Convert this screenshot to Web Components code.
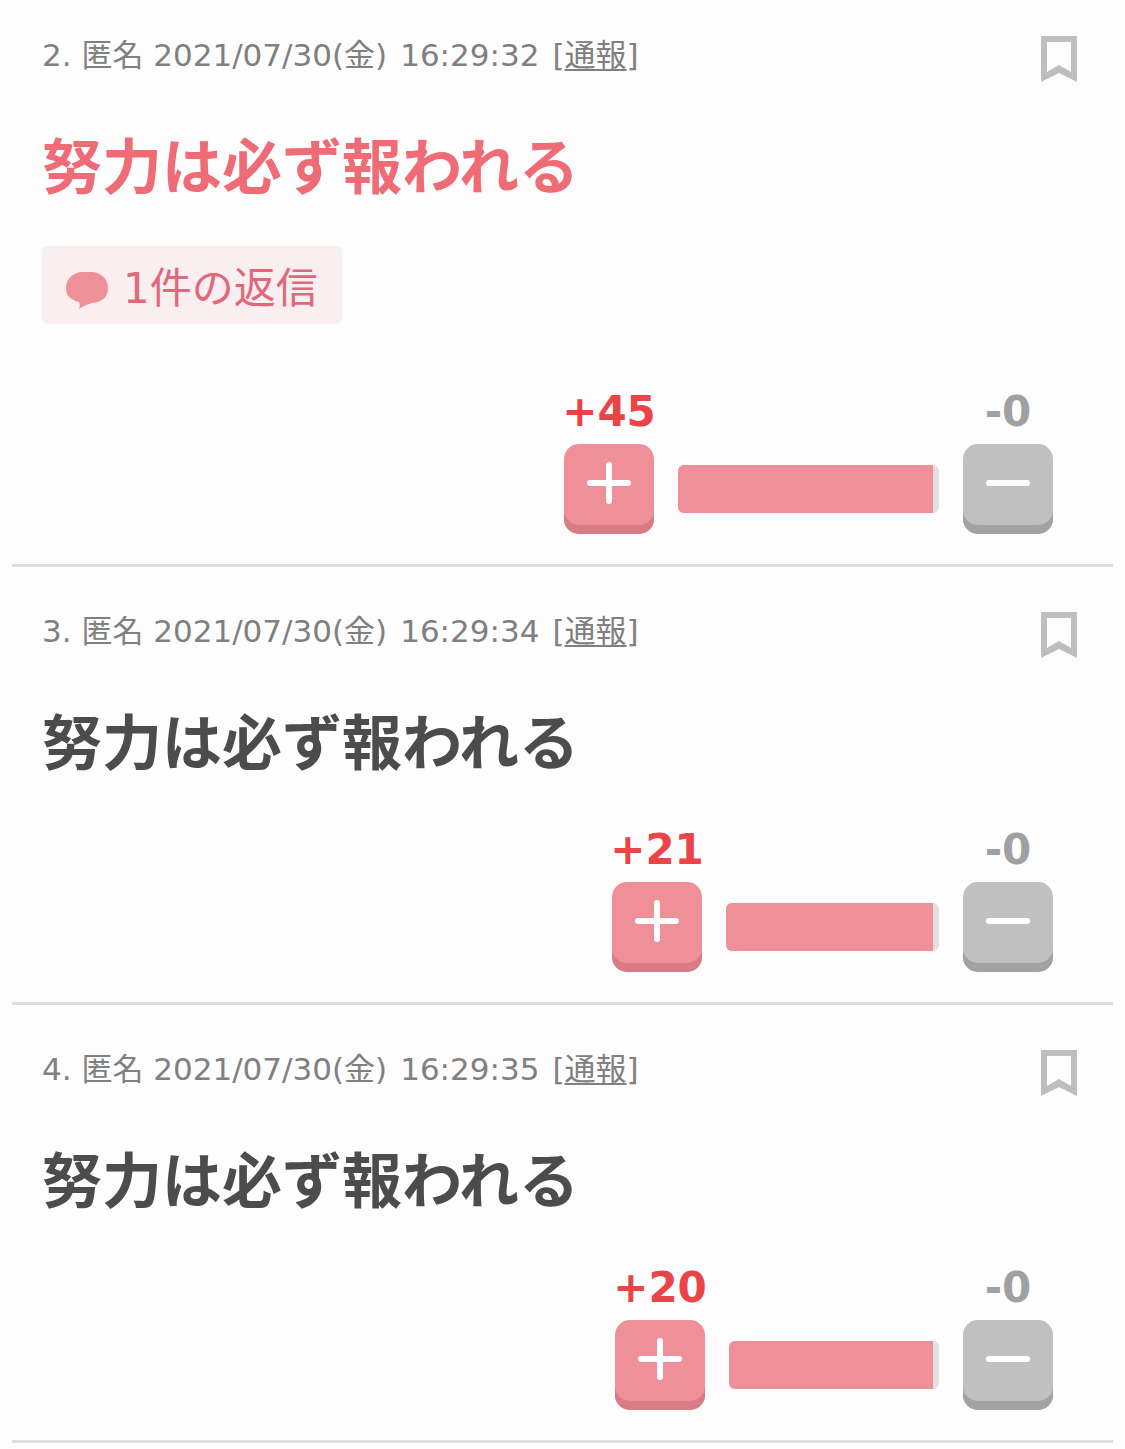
<!DOCTYPE html>
<html lang="ja">
<head>
<meta charset="utf-8">
<meta name="viewport" content="width=device-width, initial-scale=1">
<title>努力は必ず報われる</title>
<style>
    body {
        margin: 0;
        background: #fdfdfd;
        color: #4c4c4c;
        font-family: "DejaVu Sans", "Noto Sans CJK JP", sans-serif;
    }
</style>
</head>
<body>
<comment-list>
    <comment-item number="2" date="2021/07/30(金)" time="16:29:32" popular>
        努力は必ず報われる
        <reply-link slot="replies" count="1"></reply-link>
        <vote-panel slot="votes" plus="45" minus="0" style="--bar-width: 261px"></vote-panel>
    </comment-item>
    <comment-item number="3" date="2021/07/30(金)" time="16:29:34">
        努力は必ず報われる
        <vote-panel slot="votes" plus="21" minus="0" style="--bar-width: 213px"></vote-panel>
    </comment-item>
    <comment-item number="4" date="2021/07/30(金)" time="16:29:35">
        努力は必ず報われる
        <vote-panel slot="votes" plus="20" minus="0" style="--bar-width: 210px"></vote-panel>
    </comment-item>
</comment-list>

<script>
class CommentList extends HTMLElement {
    constructor() {
        super();
        this.attachShadow({ mode: 'open' });
        this.shadowRoot.innerHTML = `
            <style>
                :host {
                    display: block;
                    padding: 0 12px;
                }

                main {
                    display: flex;
                    flex-direction: column;
                }

                /* The top of the list sits closer to the edge */
                ::slotted(comment-item:first-child) {
                    --top-space: 36px;
                }
            </style>
            <main><slot></slot></main>
        `;
    }
}

class BookmarkButton extends HTMLElement {
    constructor() {
        super();
        this.attachShadow({ mode: 'open' });
        this.shadowRoot.innerHTML = `
            <style>
                :host {
                    display: block;
                }

                button {
                    display: block;
                    padding: 0;
                    border: 0;
                    background: none;
                    cursor: pointer;
                }

                svg {
                    display: block;
                }
            </style>
            <button type="button" aria-label="ブックマーク" aria-pressed="false">
                <svg width="36" height="46" viewBox="0 0 36 46" aria-hidden="true">
                    <path fill="#bebebe" fill-rule="evenodd" d="M0 0H36V46L18 37L0 46ZM6 6V36L18 29L30 36V6Z"/>
                </svg>
            </button>
        `;
        this.button = this.shadowRoot.querySelector('button');
    }

    connectedCallback() {
        this.button.addEventListener('click', () => {
            const pressed = this.button.getAttribute('aria-pressed') === 'true';
            this.button.setAttribute('aria-pressed', String(!pressed));
        });
    }
}

class ReplyLink extends HTMLElement {
    constructor() {
        super();
        this.attachShadow({ mode: 'open' });
    }

    connectedCallback() {
        this.shadowRoot.innerHTML = `
            <style>
                :host {
                    display: flex;
                }

                a {
                    display: flex;
                    align-items: center;
                    gap: 15px;
                    padding: 8px 24px 0;
                    border-radius: 6px;
                    background: #faeef1;
                    color: #e0687a;
                    font-size: 42px;
                    line-height: 70px;
                    text-decoration: none;
                }

                svg {
                    display: block;
                    margin-top: 2px;
                }
            </style>
            <a href="#replies">
                <svg width="42" height="38" viewBox="0 0 42 38" aria-hidden="true">
                    <path fill="#ef9099" d="M17 1H25C35 1 42 8 42 17C42 27 35 31 26 32C22 33 17 35 13 38C14 35 14 33 13 31C5 29 0 25 0 17C0 8 7 1 17 1Z"/>
                </svg>
                <span>${this.getAttribute('count')}件の返信</span>
            </a>
        `;
    }
}

class VotePanel extends HTMLElement {
    constructor() {
        super();
        this.attachShadow({ mode: 'open' });
    }

    connectedCallback() {
        const plus = this.getAttribute('plus');
        const minus = this.getAttribute('minus');

        this.shadowRoot.innerHTML = `
            <style>
                :host {
                    display: flex;
                    justify-content: flex-end;
                    align-items: flex-end;
                    gap: 24px;
                }

                .vote {
                    display: flex;
                    flex-direction: column;
                    align-items: center;
                    gap: 8px;
                    width: 90px;
                    color: #ea4348;
                    font-size: 42px;
                    font-weight: bold;
                    line-height: 48px;
                    white-space: nowrap;
                }

                .vote.minus {
                    color: #a0a0a0;
                }

                button {
                    display: flex;
                    justify-content: center;
                    width: 90px;
                    height: 90px;
                    padding: 17px 0 0;
                    border: 0;
                    border-radius: 15px;
                    background: #ef9099;
                    box-shadow: inset 0 -9px 0 #d97c85;
                    cursor: pointer;
                }

                .minus button {
                    background: #c0c0c0;
                    box-shadow: inset 0 -9px 0 #a2a2a2;
                }

                .bar {
                    display: flex;
                    width: var(--bar-width);
                    height: 48px;
                    margin-bottom: 21px;
                    border-radius: 6px;
                    background: #e4e0e0;
                    overflow: hidden;
                }

                .fill {
                    flex: 1;
                    margin-right: 6px;
                    background: #ef9099;
                }
            </style>
            <div class="vote plus">
                <span id="plus">+${plus}</span>
                <button type="button" aria-label="プラス" aria-describedby="plus">
                    <svg width="44" height="44" viewBox="0 0 44 44" aria-hidden="true">
                        <path d="M3 22H41M22 4V40" stroke="#fff" stroke-width="6" stroke-linecap="round"/>
                    </svg>
                </button>
            </div>
            <div class="bar"><div class="fill"></div></div>
            <div class="vote minus">
                <span id="minus">-${minus}</span>
                <button type="button" aria-label="マイナス" aria-describedby="minus">
                    <svg width="44" height="44" viewBox="0 0 44 44" aria-hidden="true">
                        <path d="M3 22H41" stroke="#fff" stroke-width="6" stroke-linecap="round"/>
                    </svg>
                </button>
            </div>
        `;
    }
}

class CommentItem extends HTMLElement {
    constructor() {
        super();
        this.attachShadow({ mode: 'open' });
    }

    connectedCallback() {
        this.shadowRoot.innerHTML = `
            <style>
                :host {
                    display: block;
                    padding: var(--top-space, 45px) 36px 30px 30px;
                    border-bottom: 3px solid #dedede;
                }

                header {
                    display: flex;
                    justify-content: space-between;
                    align-items: flex-start;
                    margin-bottom: 36px;
                }

                .meta {
                    display: flex;
                    flex-wrap: wrap;
                    column-gap: 13px;
                    margin: 0;
                    color: #808080;
                    font-size: 31px;
                    line-height: 38px;
                }

                .meta a {
                    color: inherit;
                    text-underline-offset: 3px;
                    text-decoration-thickness: 2px;
                }

                .body {
                    margin: 0;
                    font-family: "Noto Sans CJK JP", sans-serif;
                    font-size: 60px;
                    font-weight: bold;
                    line-height: 90px;
                }

                :host([popular]) .body {
                    color: #ef6b75;
                }

                ::slotted(reply-link) {
                    margin: 38px 0 64px;
                }

                ::slotted(vote-panel) {
                    margin: 42px 24px 0 0;
                }

                :host([popular]) ::slotted(vote-panel) {
                    margin-top: 0;
                }
            </style>
            <article>
                <header>
                    <p class="meta">
                        <span>${this.getAttribute('number')}. 匿名 ${this.getAttribute('date')}</span>
                        <span>${this.getAttribute('time')}</span>
                        <span>[<a href="#report">通報</a>]</span>
                    </p>
                    <bookmark-button></bookmark-button>
                </header>
                <p class="body"><slot></slot></p>
                <slot name="replies"></slot>
                <slot name="votes"></slot>
            </article>
        `;
    }
}

customElements.define('comment-list', CommentList);
customElements.define('bookmark-button', BookmarkButton);
customElements.define('reply-link', ReplyLink);
customElements.define('vote-panel', VotePanel);
customElements.define('comment-item', CommentItem);
</script>
</body>
</html>
